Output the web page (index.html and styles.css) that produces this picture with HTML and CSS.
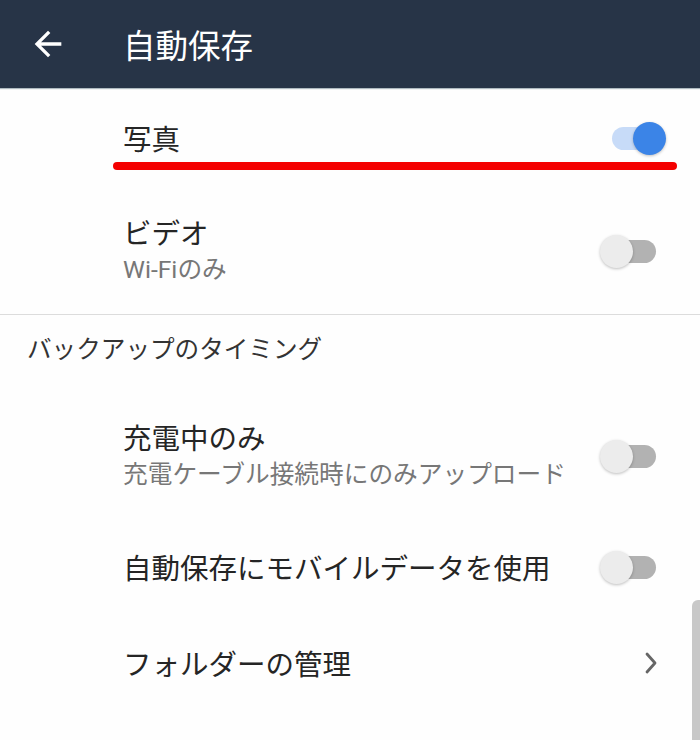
FILE: index.html
```html
<!DOCTYPE html>
<html lang="ja">
<head>
<meta charset="utf-8">
<title>自動保存</title>
<link rel="stylesheet" href="styles.css">
</head>
<body>
<div class="screen">
  <header class="appbar">
    <svg class="back" viewBox="0 0 24 24" width="40" height="40" aria-hidden="true">
      <path d="M20 11H7.83l5.59-5.59L12 4l-8 8 8 8 1.41-1.41L7.83 13H20v-2z" fill="#ffffff"/>
    </svg>
    <h1 class="title">自動保存</h1>
  </header>

  <div class="row row-photo">
    <div class="text"><div class="label">写真</div></div>
    <div class="toggle on"><span class="thumb"></span></div>
    <div class="mark"></div>
  </div>

  <div class="row row-two">
    <div class="text">
      <div class="label">ビデオ</div>
      <div class="sub">Wi-Fiのみ</div>
    </div>
    <div class="toggle"><span class="thumb"></span></div>
  </div>

  <div class="divider"></div>

  <div class="section">バックアップのタイミング</div>

  <div class="row row-two">
    <div class="text">
      <div class="label">充電中のみ</div>
      <div class="sub">充電ケーブル接続時にのみアップロード</div>
    </div>
    <div class="toggle"><span class="thumb"></span></div>
  </div>

  <div class="row row-one">
    <div class="text"><div class="label">自動保存にモバイルデータを使用</div></div>
    <div class="toggle"><span class="thumb"></span></div>
  </div>

  <div class="row row-one row-link">
    <div class="text"><div class="label">フォルダーの管理</div></div>
    <svg class="chevron" viewBox="0 0 14 24" width="14" height="24" aria-hidden="true">
      <path d="M3 3l8 9-8 9" fill="none" stroke="#666666" stroke-width="2.8" stroke-linecap="round" stroke-linejoin="round"/>
    </svg>
  </div>

  <div class="scrollbar"></div>
</div>
</body>
</html>
```

FILE: styles.css
```css
* { box-sizing: border-box; }

html, body {
  margin: 0;
  padding: 0;
  background: #ffffff;
}

body {
  font-family: Roboto, "Noto Sans CJK JP", "Noto Sans", sans-serif;
  color: #222222;
}

.screen {
  position: relative;
  width: 700px;
  height: 740px;
  overflow: hidden;
  background: #fefefe;
}

.appbar {
  height: 88px;
  background: #273447;
  display: flex;
  align-items: center;
  padding-left: 28px;
  box-shadow: 0 1px 1px rgba(120, 140, 150, 0.6);
}

.back {
  display: block;
  flex: none;
}

.title {
  margin: 0 0 0 55px;
  font-size: 32.5px;
  font-weight: 400;
  color: #ffffff;
  line-height: 40px;
  font-family: "Noto Sans CJK JP", sans-serif;
}

.row {
  position: relative;
  display: flex;
  align-items: center;
  justify-content: space-between;
  padding-left: 123px;
  padding-right: 34px;
}

.row-photo { height: 100px; }
.row-two { height: 126px; }
.row-one { height: 96px; }
.row-link { padding-right: 42px; }

.label {
  font-family: "Noto Sans CJK JP", sans-serif;
  font-size: 28.5px;
  line-height: 38px;
  color: #252525;
}

.sub {
  font-family: Roboto, "Noto Sans CJK JP", sans-serif;
  font-size: 24.7px;
  line-height: 38px;
  color: #777777;
}

.divider {
  height: 1px;
  background: #dcdcdc;
}

.section {
  height: 78px;
  padding: 20px 0 0 27px;
  font-family: "Noto Sans CJK JP", sans-serif;
  font-size: 24.6px;
  line-height: 24px;
  color: #333333;
}

.toggle {
  position: relative;
  flex: none;
  width: 66px;
  height: 33px;
}

.toggle::before {
  content: "";
  position: absolute;
  left: 12px;
  right: 10px;
  top: 5px;
  height: 23px;
  border-radius: 12px;
  background: #b2b2b2;
}

.toggle .thumb {
  position: absolute;
  top: 0;
  left: 0;
  width: 33px;
  height: 33px;
  border-radius: 50%;
  background: #ececec;
  box-shadow: 0 1px 3px rgba(0, 0, 0, 0.25);
}

.toggle.on::before {
  background: #c7dbf8;
}

.toggle.on .thumb {
  left: 33px;
  background: #3b84e7;
}

.chevron {
  display: block;
  flex: none;
}

.mark {
  position: absolute;
  left: 113px;
  top: 74px;
  width: 564px;
  height: 8px;
  border-radius: 4px;
  background: #f40000;
}

.scrollbar {
  position: absolute;
  right: 0;
  top: 600px;
  bottom: 0;
  width: 8px;
  border-radius: 6px 0 0 0;
  background: #c8c8c8;
}
```
